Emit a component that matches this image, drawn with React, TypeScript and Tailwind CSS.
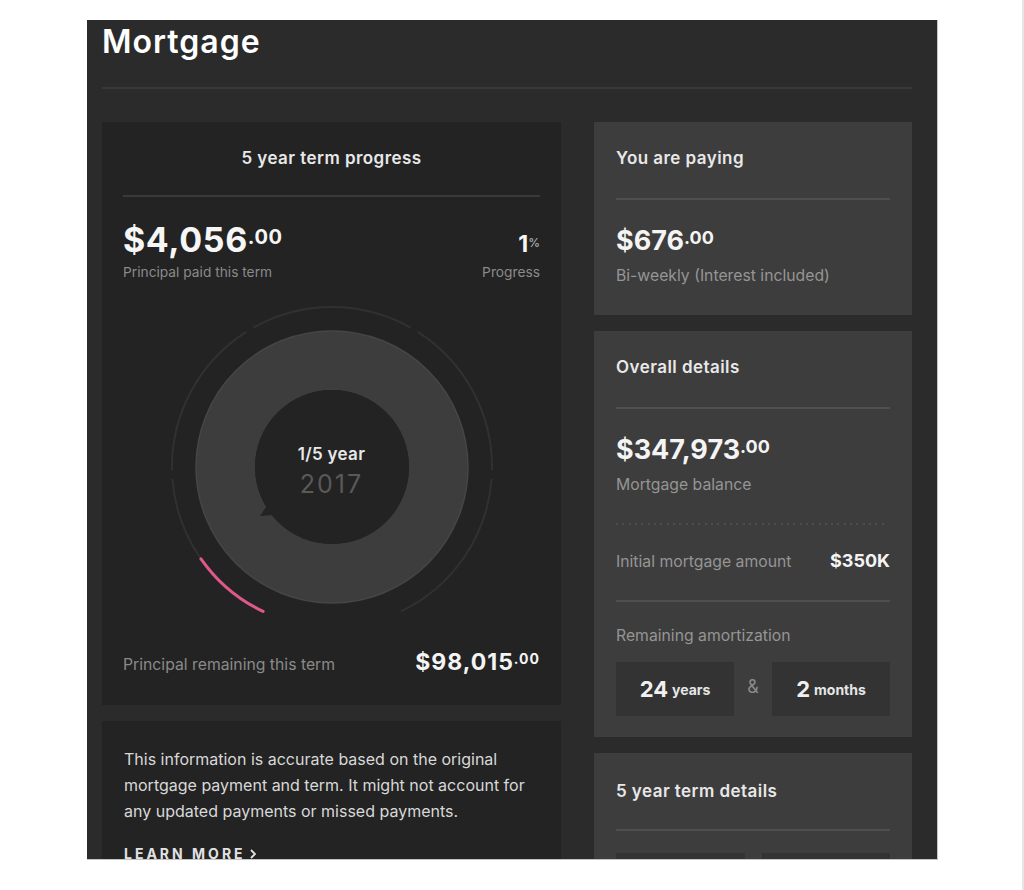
import React from 'react';

const SIZE = 340;
const C = SIZE / 2;

// degrees measured clockwise from 12 o'clock
function polar(deg: number, r: number) {
  const a = (deg * Math.PI) / 180;
  return [C + r * Math.sin(a), C - r * Math.cos(a)];
}

function arc(from: number, to: number, r: number) {
  const [x1, y1] = polar(from, r);
  const [x2, y2] = polar(to, r);
  const large = to - from > 180 ? 1 : 0;
  return `M ${x1} ${y1} A ${r} ${r} 0 ${large} 1 ${x2} ${y2}`;
}

function TermDial() {
  const start = 205.5;
  const seg = 61.8;
  const gap = 3;
  const segments = [0, 1, 2, 3, 4].map((i) => {
    const from = start + i * seg + (i === 0 ? 0 : gap / 2);
    const to = start + (i + 1) * seg - (i === 4 ? 0 : gap / 2);
    return arc(from, to, 160);
  });

  return (
    <div className="relative mx-auto h-[340px] w-[340px]">
      <svg className="block" width={SIZE} height={SIZE} viewBox={`0 0 ${SIZE} ${SIZE}`}>
        {segments.map((d, i) => (
          <path key={i} d={d} fill="none" stroke="#313131" strokeWidth={2} />
        ))}
        <path d={arc(start, 235, 160)} fill="none" stroke="#e0578c" strokeWidth={3} strokeLinecap="round" />
        <circle cx={C} cy={C} r={106.5} fill="none" stroke="#3d3d3d" strokeWidth={59} />
        <circle cx={C} cy={C} r={136} fill="none" stroke="#464646" strokeWidth={1.5} />
        <circle cx={C} cy={C} r={77} fill="#232323" />
        <polygon points="104,210 98,219 110,218" fill="#232323" />
      </svg>
      <div className="absolute inset-0 flex flex-col items-center justify-center pt-[8px]">
        <div className="text-[17px] font-semibold leading-[20px] tracking-[0.3px] text-[#e8e8e8]">1/5 year</div>
        <div className="mt-[6px] text-[25px] leading-[28px] tracking-[2px] text-[#595959]">2017</div>
      </div>
    </div>
  );
}

function Divider({ tone = 'dark' }: { tone?: 'dark' | 'light' }) {
  return <div className={tone === 'dark' ? 'h-[2px] bg-[#393939]' : 'h-[2px] bg-[#4f4f4f]'} />;
}

function CardTitle({ children }: { children: React.ReactNode }) {
  return <h2 className="text-[17px] font-semibold leading-[24px] tracking-[0.45px] text-[#e8e8e8]">{children}</h2>;
}

function Amount({ whole, sup }: { whole: string; sup: string }) {
  return (
    <div className="text-[27px] font-bold leading-[32px] text-[#f4f4f4]">
      {whole}
      <span className="align-[6px] text-[18px] leading-none">{sup}</span>
    </div>
  );
}

function Dots() {
  return (
    <div className="flex w-[268px] justify-between">
      {Array.from({ length: 43 }).map((_, i) => (
        <span key={i} className="h-[2px] w-[2px] rounded-full bg-[#555555]" />
      ))}
    </div>
  );
}

function TimeBox({ value, unit, width }: { value: string; unit: string; width: string }) {
  return (
    <div className={`flex h-[54px] items-center justify-center bg-[#333333] ${width}`}>
      <span className="text-[22px] font-bold text-[#f0f0f0]">{value}</span>
      <span className="ml-[4px] text-[14px] font-bold text-[#e6e6e6]">{unit}</span>
    </div>
  );
}

export default function App() {
  return (
    <div className="h-[890px] w-full overflow-hidden border-r-2 border-[#e6e6e6] bg-white pt-[20px] font-[Inter,'Liberation_Sans',sans-serif]">
      <div className="ml-[87px] h-[840px] w-[851px] overflow-hidden border-r border-b border-[#c4c4c4] bg-[#2b2b2b] pr-[25px] pl-[15px]">
        <h1 className="pt-[2px] text-[32px] font-semibold leading-[40px] tracking-[1px] text-white">Mortgage</h1>
        <div className="mt-[25px] h-[2px] bg-[#383838]" />

        <div className="mt-[33px] grid grid-cols-[459px_318px] gap-x-[33px]">
          {/* left column */}
          <div className="flex flex-col gap-[16px]">
            <section className="bg-[#232323] px-[21px] pt-[24px] pb-[26px]">
              <div className="text-center">
                <CardTitle>5 year term progress</CardTitle>
              </div>
              <div className="mt-[25px]">
                <Divider />
              </div>

              <div className="mt-[23px] flex justify-between">
                <div>
                  <div className="text-[34px] font-bold leading-[40px] tracking-[0.6px] text-[#f6f6f6]">
                    $4,056<span className="align-[8px] text-[20px] leading-none">.00</span>
                  </div>
                  <div className="mt-[4px] text-[13.75px] leading-[16px] text-[#8a8a8a]">Principal paid this term</div>
                </div>
                <div className="text-right">
                  <div className="text-[34px] font-bold leading-[40px] text-[#f6f6f6]">
                    <span className="text-[23px] leading-none">1</span>
                    <span className="align-[5px] text-[12px] font-normal leading-none text-[#bdbdbd]">%</span>
                  </div>
                  <div className="mt-[4px] text-[13.75px] leading-[16px] text-[#8a8a8a]">Progress</div>
                </div>
              </div>

              <div className="mt-[17px]">
                <TermDial />
              </div>

              <div className="mt-[11px] flex items-baseline justify-between">
                <span className="text-[15.75px] leading-[28px] text-[#8a8a8a]">Principal remaining this term</span>
                <span className="text-[23px] font-bold leading-[28px] tracking-[1px] text-[#f4f4f4]">
                  $98,015<span className="align-[6px] text-[14px] leading-none">.00</span>
                </span>
              </div>
            </section>

            <section className="bg-[#232323] px-[22px] pt-[25px] pb-[30px]">
              <p className="text-[16px] leading-[26px] text-[#d8d8d8]">
                This information is accurate based on the original mortgage payment and term. It might not account for any
                updated payments or missed payments.
              </p>
              <a className="mt-[20px] inline-flex items-center text-[14px] font-bold leading-[20px] tracking-[3px] text-[#e2e2e2]">
                LEARN MORE
                <svg className="ml-[2px]" width="10" height="12" viewBox="0 0 10 12" fill="none">
                  <path d="M3 2l4 4-4 4" stroke="#e2e2e2" strokeWidth="1.8" />
                </svg>
              </a>
            </section>
          </div>

          {/* right column */}
          <div className="flex flex-col gap-[16px]">
            <section className="bg-[#3d3d3d] px-[22px] pt-[24px] pb-[29px]">
              <CardTitle>You are paying</CardTitle>
              <div className="mt-[28px]">
                <Divider tone="light" />
              </div>
              <div className="mt-[25px]">
                <Amount whole="$676" sup=".00" />
              </div>
              <div className="mt-[9px] text-[15.75px] leading-[20px] text-[#959595]">Bi-weekly (Interest included)</div>
            </section>

            <section className="bg-[#3d3d3d] px-[22px] pt-[24px] pb-[21px]">
              <CardTitle>Overall details</CardTitle>
              <div className="mt-[28px]">
                <Divider tone="light" />
              </div>
              <div className="mt-[25px]">
                <Amount whole="$347,973" sup=".00" />
              </div>
              <div className="mt-[9px] text-[15.75px] leading-[20px] text-[#959595]">Mortgage balance</div>
              <div className="mt-[28px]">
                <Dots />
              </div>
              <div className="mt-[26px] flex items-baseline justify-between">
                <span className="text-[15.75px] leading-[20px] text-[#959595]">Initial mortgage amount</span>
                <span className="text-[18px] font-bold leading-[20px] text-[#f4f4f4]">$350K</span>
              </div>
              <div className="mt-[28px]">
                <Divider tone="light" />
              </div>
              <div className="mt-[24px] text-[15.75px] leading-[20px] text-[#959595]">Remaining amortization</div>
              <div className="mt-[16px] flex items-center">
                <TimeBox value="24" unit="years" width="w-[118px]" />
                <span className="flex-1 pb-[6px] text-center text-[18px] text-[#8a8a8a]">&amp;</span>
                <TimeBox value="2" unit="months" width="w-[118px]" />
              </div>
            </section>

            <section className="bg-[#3d3d3d] px-[22px] pt-[26px] pb-[21px]">
              <CardTitle>5 year term details</CardTitle>
              <div className="mt-[26px]">
                <Divider tone="light" />
              </div>
              <div className="mt-[22px] flex gap-[17px]">
                <div className="h-[54px] w-[129px] bg-[#333333]" />
                <div className="h-[54px] w-[128px] bg-[#333333]" />
              </div>
            </section>
          </div>
        </div>
      </div>
    </div>
  );
}
